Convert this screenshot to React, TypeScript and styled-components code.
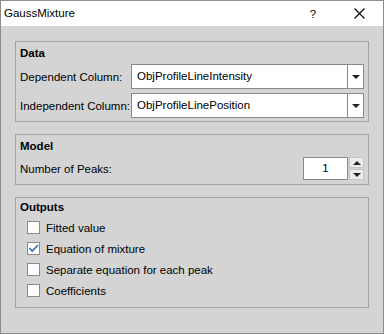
import * as React from "react";
import styled, { createGlobalStyle } from "styled-components";

const GlobalStyle = createGlobalStyle`
  html, body {
    margin: 0;
    padding: 0;
    background: #d4d4d4;
  }
  body {
    font-family: "Liberation Sans", Arial, sans-serif;
    font-size: 11.5px;
    color: #000;
  }
`;

const outputs = [
  { label: "Fitted value", checked: false },
  { label: "Equation of mixture", checked: true },
  { label: "Separate equation for each peak", checked: false },
  { label: "Coefficients", checked: false },
];

const App: React.FC = () => {
  return (
    <>
      <GlobalStyle />
      <Window>
        <TitleBar>
          <Title>GaussMixture</Title>
          <HelpButton>?</HelpButton>
          <CloseButton>
            <svg width="11" height="11" viewBox="0 0 11 11">
              <path d="M0.5 0.5 L10.5 10.5 M10.5 0.5 L0.5 10.5" stroke="#000" strokeWidth="1.1" />
            </svg>
          </CloseButton>
        </TitleBar>
        <Body>
          <Group>
            <GroupTitle $height={22}>Data</GroupTitle>
            <FormGrid>
              <Label>Dependent Column:</Label>
              <Combo>
                <ComboText>ObjProfileLineIntensity</ComboText>
                <ComboButton>
                  <DownArrow />
                </ComboButton>
              </Combo>
              <Label>Independent Column:</Label>
              <Combo>
                <ComboText>ObjProfileLinePosition</ComboText>
                <ComboButton>
                  <DownArrow />
                </ComboButton>
              </Combo>
            </FormGrid>
          </Group>

          <Group $bottom={4}>
            <GroupTitle $height={22}>Model</GroupTitle>
            <SpinRow>
              <Label>Number of Peaks:</Label>
              <SpinBox>
                <SpinField>1</SpinField>
                <SpinButtons>
                  <SpinButton>
                    <UpArrow />
                  </SpinButton>
                  <SpinButton>
                    <DownArrow />
                  </SpinButton>
                </SpinButtons>
              </SpinBox>
            </SpinRow>
          </Group>

          <Group $bottom={6}>
            <GroupTitle $height={19}>Outputs</GroupTitle>
            {outputs.map((o) => (
              <CheckRow key={o.label}>
                <CheckBox>
                  {o.checked && (
                    <svg width="11" height="11" viewBox="0 0 11 11">
                      <path d="M1.5 5 L4.3 8 L10 2" fill="none" stroke="#2f6db5" strokeWidth="1.6" />
                    </svg>
                  )}
                </CheckBox>
                <span>{o.label}</span>
              </CheckRow>
            ))}
          </Group>
        </Body>
      </Window>
    </>
  );
};

//Styled components

const Window = styled.div`
  box-sizing: border-box;
  width: 384px;
  height: 334px;
  border: 1px solid #8c8c8c;
  background: #d4d4d4;
  display: flex;
  flex-direction: column;
`;

const TitleBar = styled.div`
  height: 25px;
  background: #fff;
  display: flex;
  align-items: center;
  padding-left: 3px;
`;

const Title = styled.div`
  flex: 1;
  font-size: 11.5px;
  padding-bottom: 1px;
`;

const HelpButton = styled.div`
  width: 14px;
  text-align: center;
  margin-right: 34px;
`;

const CloseButton = styled.div`
  display: flex;
  margin-right: 18px;
`;

const Body = styled.div`
  flex: 1;
  padding: 15px 14px 0 14px;
  display: flex;
  flex-direction: column;
  gap: 12px;
`;

const Group = styled.div<{ $bottom?: number }>`
  border: 1px solid #a3a3a3;
  padding: 0 4px ${(p) => p.$bottom ?? 3}px 4px;
  display: flex;
  flex-direction: column;
`;

const GroupTitle = styled.div<{ $height: number }>`
  font-weight: bold;
  height: ${(p) => p.$height}px;
  line-height: ${(p) => p.$height}px;
`;

const FormGrid = styled.div`
  display: grid;
  grid-template-columns: 111px 1fr;
  row-gap: 4px;
  align-items: center;
`;

const Label = styled.div`
  white-space: nowrap;
`;

const Combo = styled.div`
  box-sizing: border-box;
  height: 25px;
  border: 1px solid #8a8a8a;
  background: #fff;
  display: flex;
  align-items: stretch;
`;

const ComboText = styled.div`
  flex: 1;
  padding-left: 5px;
  line-height: 23px;
`;

const ComboButton = styled.div`
  width: 15px;
  border-left: 1px solid #8a8a8a;
  display: flex;
  align-items: center;
  justify-content: center;
`;

const DownArrow = styled.div`
  width: 0;
  height: 0;
  border-left: 4px solid transparent;
  border-right: 4px solid transparent;
  border-top: 4px solid #222;
`;

const UpArrow = styled(DownArrow)`
  border-top: none;
  border-bottom: 4px solid #222;
`;

const SpinRow = styled.div`
  display: flex;
  align-items: center;
  justify-content: space-between;
`;

const SpinBox = styled.div`
  display: flex;
  gap: 1px;
  height: 23px;
`;

const SpinField = styled.div`
  box-sizing: border-box;
  width: 45px;
  border: 1px solid #8a8a8a;
  background: #fff;
  text-align: center;
  line-height: 21px;
`;

const SpinButtons = styled.div`
  width: 15px;
  display: flex;
  flex-direction: column;
  gap: 1px;
`;

const SpinButton = styled.div`
  flex: 1;
  box-sizing: border-box;
  border: 1px solid #c4c4c4;
  background: #ececec;
  display: flex;
  align-items: center;
  justify-content: center;
`;

const CheckRow = styled.div`
  height: 21px;
  display: flex;
  align-items: center;
  padding-left: 7px;
  gap: 6px;
`;

const CheckBox = styled.div`
  box-sizing: border-box;
  width: 13px;
  height: 13px;
  border: 1px solid #8a8a8a;
  background: #fff;
  display: flex;
  align-items: center;
  justify-content: center;
`;

export default App;
